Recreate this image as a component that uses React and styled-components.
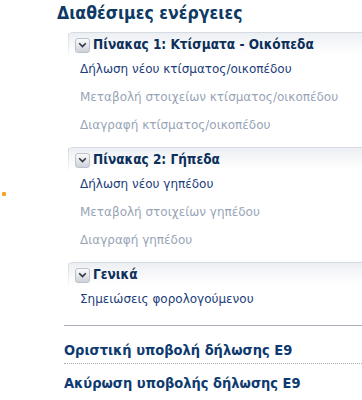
import React from "react";
import styled, { createGlobalStyle } from "styled-components";

const GlobalStyle = createGlobalStyle`
  html, body { margin: 0; padding: 0; background: #fff; }
  body { font-family: "DejaVu Sans", "Liberation Sans", sans-serif; }
`;

const condensed = `
  font-family: "DejaVu Sans Condensed", "DejaVu Sans", sans-serif;
  font-stretch: condensed;
  font-weight: bold;
`;

const Page = styled.div`
  position: relative;
  width: 362px;
  height: 400px;
  overflow: hidden;
  padding-left: 57px;
  box-sizing: border-box;
`;

const Dot = styled.span`
  position: absolute;
  left: 2px;
  top: 192px;
  width: 4px;
  height: 4px;
  border-radius: 1px;
  background: #f6a623;
`;

const Title = styled.h1`
  margin: 0;
  height: 32px;
  ${condensed}
  font-size: 17.5px;
  color: #0e3a64;
  line-height: 26px;
  white-space: nowrap;
`;

const Body = styled.div`
  padding-left: 7px;
  display: flex;
  flex-direction: column;
`;

const Group = styled.section`
  margin-left: 4px;
  margin-bottom: ${(p) => (p.$last ? "12px" : "8px")};
`;

const Header = styled.div`
  position: relative;
  height: 23px;
  display: flex;
  align-items: center;
  gap: 3px;
  padding-left: 7px;
  border-top: 1px solid #d6dbe1;
  border-top-left-radius: 5px;
  background: linear-gradient(#eceff3, #fbfbfc 70%, #fff);
  box-sizing: border-box;
  &::before {
    content: "";
    position: absolute;
    left: 0;
    top: 0;
    bottom: -4px;
    width: 1px;
    background: linear-gradient(#d6dbe1, rgba(214, 219, 225, 0));
    border-top-left-radius: 5px;
  }
`;

const Toggle = styled.span`
  width: 13px;
  height: 13px;
  border: 1px solid #bcc2ca;
  border-radius: 3px;
  background: linear-gradient(#fbfbfc, #cdd2d9);
  display: flex;
  align-items: center;
  justify-content: center;
  flex: none;
  margin-top: 2px;
`;

const HeaderText = styled.span`
  ${condensed}
  font-size: 13.5px;
  color: #0b2f5a;
  white-space: nowrap;
`;

const Item = styled.div`
  height: 28px;
  display: flex;
  align-items: center;
  padding-left: 12px;
  font-size: 12px;
  color: ${(p) => (p.$disabled ? "#98a4b6" : "#1b3d7a")};
  white-space: nowrap;
`;

const Separator = styled.div`
  height: 0;
  border-top: ${(p) => (p.$dotted ? "1px dotted #a8adb4" : "1px solid #a9b0ba")};
`;

const Action = styled.div`
  height: ${(p) => p.$h}px;
  padding-top: ${(p) => p.$pt}px;
  box-sizing: border-box;
  ${condensed}
  font-size: 14.5px;
  line-height: 16px;
  color: #0d3a70;
  white-space: nowrap;
`;

const Chevron = () => (
  <svg width="9" height="6" viewBox="0 0 9 6">
    <path d="M1.2 1.2 L4.5 4.5 L7.8 1.2" fill="none" stroke="#2f3643" strokeWidth="1.6" />
  </svg>
);

const groups = [
  {
    title: "Πίνακας 1: Κτίσματα - Οικόπεδα",
    items: [
      ["Δήλωση νέου κτίσματος/οικοπέδου", false],
      ["Μεταβολή στοιχείων κτίσματος/οικοπέδου", true],
      ["Διαγραφή κτίσματος/οικοπέδου", true],
    ],
  },
  {
    title: "Πίνακας 2: Γήπεδα",
    items: [
      ["Δήλωση νέου γηπέδου", false],
      ["Μεταβολή στοιχείων γηπέδου", true],
      ["Διαγραφή γηπέδου", true],
    ],
  },
  {
    title: "Γενικά",
    items: [["Σημειώσεις φορολογούμενου", false]],
  },
];

export default function App() {
  return (
    <>
      <GlobalStyle />
      <Page>
        <Dot />
        <Title>Διαθέσιμες ενέργειες</Title>
        <Body>
          {groups.map((g, i) => (
            <Group key={g.title} $last={i === groups.length - 1}>
              <Header>
                <Toggle>
                  <Chevron />
                </Toggle>
                <HeaderText>{g.title}</HeaderText>
              </Header>
              {g.items.map(([t, d]) => (
                <Item key={t} $disabled={d}>
                  {t}
                </Item>
              ))}
            </Group>
          ))}
          <Separator />
          <Action $h={37} $pt={16}>Οριστική υποβολή δήλωσης Ε9</Action>
          <Separator $dotted />
          <Action $h={36} $pt={11}>Ακύρωση υποβολής δήλωσης Ε9</Action>
        </Body>
      </Page>
    </>
  );
}
